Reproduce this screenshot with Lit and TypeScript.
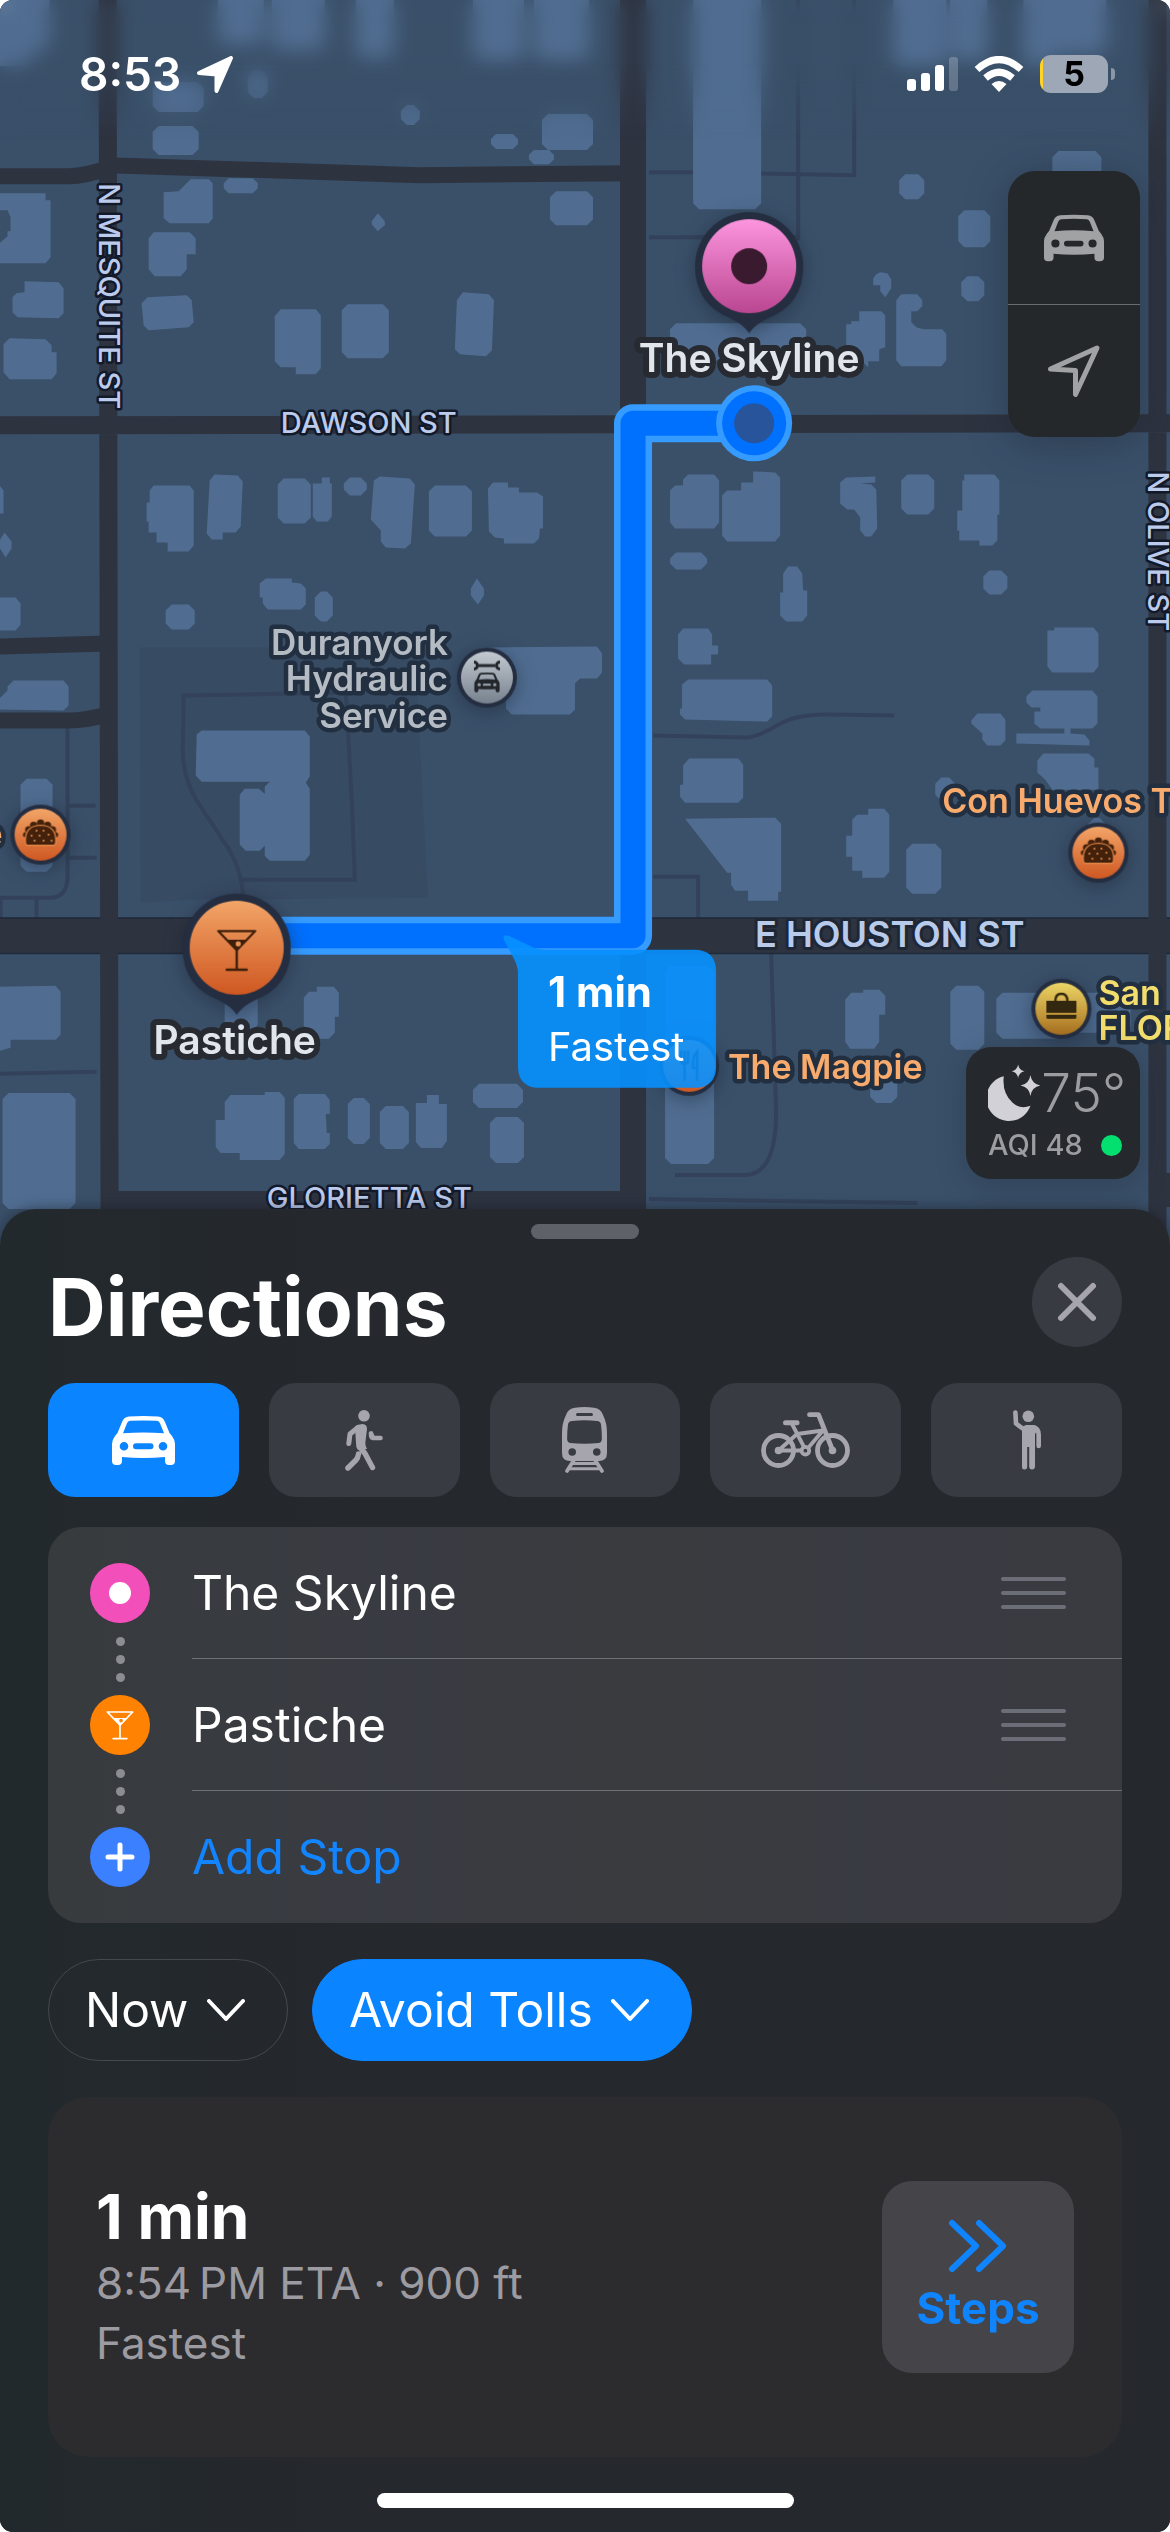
import { LitElement, html, svg, css } from "lit";
import { customElement, property, state } from "lit/decorators.js";
import { classMap } from "lit/directives/class-map.js";

type Box = [number, number, number, number];

/* Footprints given as left, top, right, bottom; corners are cut when drawn. */
const BLOCKS: Box[] = [
  [-10, -10, 50, 50], [-10, 20, 32, 66], [218, -10, 264, 44], [272, -10, 325, 50], [356, -10, 394, 58],
  [473, -10, 524, 60], [534, -10, 589, 60], [893, -10, 946, 66], [950, -10, 987, 60],
  [1023, -10, 1106, 54], [1023, 20, 1052, 66], [693, -10, 761, 209],
  [153, 82, 204, 112], [248, 70, 268, 98], [401, 105, 420, 125],
  [153, 126, 199, 155], [491, 134, 518, 149], [529, 150, 554, 164], [542, 114, 593, 150],
  [224, 178, 258, 193], [342, 304, 389, 358], [550, 191, 593, 225],
  [899, 174, 924, 199], [958, 210, 990, 247], [961, 276, 984, 301], [1052, 151, 1101, 185],
  [670, 323, 806, 360], [278, 478, 311, 523], [344, 477, 367, 495], [429, 485, 472, 536],
  [315, 591, 333, 621], [166, 604, 195, 629], [21, 778, 53, 871], [901, 474, 934, 514],
  [670, 552, 707, 569], [983, 570, 1007, 594], [935, 777, 955, 800], [906, 843, 941, 893],
  [1088, 817, 1105, 840], [950, 985, 984, 1049], [996, 992, 1062, 1038], [1062, 992, 1130, 1032],
  [870, 1076, 897, 1102], [665, 965, 714, 1163], [3, 1092, 76, 1208], [225, 990, 258, 1030],
  [348, 1097, 370, 1143], [380, 1105, 409, 1148], [473, 1083, 523, 1107], [490, 1116, 524, 1162],
];

const FOOTPRINTS = [
  "164,192 179,191 191,179 209,179 213,183 213,218 209,223 170,223 164,218",
  "149,238 154,232 190,232 196,238 196,254 187,254 187,269 181,276 155,276 149,269",
  "142,303 148,297 187,295 192,300 194,322 189,327 149,330 144,325",
  "275,316 281,309 316,309 321,315 321,368 316,374 296,374 296,367 281,367 275,361",
  "457,300 463,292 489,294 494,300 492,350 486,356 460,354 455,349",
  "0,193 46,193 46,200 51,200 51,257 46,263 0,263 0,243 8,236 8,231 11,231 11,217 8,210 0,210",
  "25,281 59,282 64,288 64,313 59,318 18,317 13,312 13,297 17,293 25,292",
  "4,344 10,338 46,339 52,345 52,352 57,352 57,373 52,379 10,379 4,372",
  "378,213 385,221 385,225 378,231 372,224 372,221",
  "873,278 876,274 880,272 887,273 891,279 891,288 885,297 880,291 880,285 873,285",
  "859,311 881,311 885,315 885,347 879,349 879,361 868,361 868,367 846,345 846,324 851,324 851,321 859,321",
  "896,300 901,294 917,294 922,300 922,306 917,311 911,311 911,322 916,327 923,329 942,329 946,334 946,360 941,366 901,366 896,360",
  "150,490 154,485 190,485 194,490 194,545 189,551 168,551 168,542 157,542 157,532 149,532 149,521 147,521 147,502 150,502",
  "210,480 215,474 238,475 243,481 241,526 236,532 223,532 223,539 212,539 207,533",
  "313,483 322,483 322,477 330,477 330,483 332,483 332,516 328,521 317,521 313,516",
  "374,480 380,476 410,478 415,484 411,543 405,548 386,547 381,541 381,530 371,519",
  "488,488 493,482 508,482 508,487 519,487 519,492 537,492 543,496 543,528 540,528 539,538 534,543 504,543 504,538 495,537 489,531",
  "260,583 266,578 292,578 292,582 301,583 306,588 306,604 301,609 268,609 263,603 263,597 260,597",
  "477,578 484,588 484,595 478,604 471,595 471,588",
  "0,485 4,490 4,513 0,513",
  "5,532 12,541 12,548 6,557 0,547 0,540",
  "0,597 16,597 21,603 21,624 16,630 0,630",
  "0,698 8,690 8,686 14,680 64,680 69,686 69,705 64,710 0,709",
  "480,647 597,646 602,653 602,672 597,678 580,678 575,683 575,709 570,714 512,714 506,708 506,690 480,690",
  "197,734 202,730 305,730 310,736 310,776 306,782 310,788 310,854 305,860 270,860 265,855 265,845 260,850 246,850 240,844 240,794 245,788 259,788 265,793 265,786 270,781 202,781 196,775",
  "670,490 675,485 683,485 683,479 688,474 714,474 719,480 719,522 714,528 675,528 670,522",
  "722,495 727,490 741,490 741,482 753,482 753,471 775,472 780,477 780,535 775,541 727,541 722,535",
  "840,482 846,477 875,476 875,482 860,483 871,484 876,489 877,528 871,536 865,536 860,530 860,517 854,509 847,509 840,503",
  "964,474 994,474 999,480 999,514 997,514 997,540 992,545 979,545 979,540 959,540 959,530 957,530 957,510 962,510 962,480 964,480",
  "783,573 788,566 797,566 802,573 803,590 807,590 807,615 802,621 786,621 780,615 780,592 783,592",
  "678,634 683,628 708,628 712,634 712,645 718,645 718,654 711,654 711,664 684,664 678,658",
  "682,684 688,679 767,679 772,685 772,716 767,721 685,719 680,714 680,708 682,708",
  "1047,630 1054,630 1054,627 1093,627 1098,633 1098,666 1093,672 1052,672 1047,666",
  "1026,696 1032,690 1092,690 1097,696 1097,723 1092,728 1070,728 1070,733 1084,734 1089,740 1089,745 1016,743 1016,733 1064,733 1064,728 1040,728 1034,723 1034,711 1040,711 1040,707 1031,707 1026,702",
  "971,720 977,713 1000,713 1005,719 1005,740 1000,745 987,745 982,739 982,733 971,723",
  "1037,760 1043,753 1088,753 1094,758 1094,767 1098,767 1098,789 1052,789 1045,779 1037,772",
  "683,765 689,758 738,758 743,764 743,797 738,802 685,802 680,796 680,784 683,784",
  "685,818 775,817 781,823 781,891 778,891 778,900 748,900 748,890 735,890 731,884 731,872 727,872",
  "852,819 857,814 868,814 868,808 884,808 889,814 889,871 884,877 862,877 862,870 852,870 852,856 846,856 846,835 852,835",
  "845,999 851,992 863,992 863,989 879,989 885,995 885,1014 879,1014 879,1041 874,1048 850,1048 845,1041",
  "0,986 56,985 61,991 61,1034 56,1039 11,1039 11,1047 0,1050",
  "304,997 309,991 317,991 317,986 334,986 339,992 339,1016 335,1016 335,1032 329,1038 316,1038 304,1025",
  "225,1101 231,1094 265,1094 265,1091 280,1091 285,1097 285,1153 280,1159 240,1159 240,1152 221,1152 216,1146 216,1119 225,1119",
  "294,1098 299,1093 325,1093 330,1099 330,1113 326,1113 327,1132 330,1132 330,1143 325,1148 299,1148 294,1142",
  "416,1102 427,1102 427,1094 439,1094 439,1103 447,1103 447,1140 442,1147 421,1147 416,1141",
];

const PATHS = [
  "M649 172H693L854 175V0",
  "M798 0V240",
  "M649 237H798",
  "M68 726V875Q68 897 50 897H0M68 805H96M68 857H97M37 897V918M1 897V918",
  "M345 692L184 695L183 752Q184 778 197 800L230 850Q242 870 244 900",
  "M346 692L352 800L355 879H243",
  "M653 735L745 737Q756 737 775 726Q795 713 830 714L894 715",
  "M653 876H698V918",
  "M771 953L776 1110Q776 1174 745 1174H675",
  "M649 1198L917 1202",
  "M0 1073L97 1071",
];

const cut = ([l, t, r, b]: Box) => {
  const c = Math.min(6, Math.round(Math.min(r - l, b - t) / 3));
  return `M${l + c} ${t}H${r - c}L${r} ${t + c}V${b - c}L${r - c} ${b}H${l + c}L${l} ${b - c}V${t + c}Z`;
};

const carShape = svg`
  <path fill="currentColor" fill-rule="evenodd" d="M0 28Q0 24 3 20L5.500 17L10 6Q12 1 17 .6Q31.500 -.6 46 .6Q51 1 53 6L57.500 17L60 20Q63 24 63 28V45Q63 49 59 49H57Q53 49 53 45V41Q31.500 43 10 41V45Q10 49 6 49H4Q0 49 0 45ZM11 17.300L15 7.300Q16 5 18 4.800Q31.500 4 45 4.800Q47 5 48 7.300L52 17.300Q31.500 15.500 11 17.300ZM12 26A4.300 4.300 0 1 0 12 34.600A4.300 4.300 0 1 0 12 26ZM51 26A4.300 4.300 0 1 0 51 34.600A4.300 4.300 0 1 0 51 26ZM24 27.300A3 3 0 0 0 24 33.300H38.500A3 3 0 0 0 38.500 27.300Z"/>`;

const carIcon = html`<svg width="63" height="49" viewBox="0 0 63 49" aria-hidden="true">${carShape}</svg>`;

const walkIcon = html`<svg width="38" height="61" viewBox="0 0 38 61" fill="none" stroke="currentColor" stroke-linecap="round" stroke-linejoin="round" aria-hidden="true">
  <circle cx="19" cy="5.800" r="5.800" fill="currentColor" stroke="none"/>
  <path fill="currentColor" stroke="none" d="M10 16.500Q13 14 17.500 14Q22 14.200 22 19L20.300 33Q20.300 36 22 39L13 40Q10.800 37 11 33Z"/>
  <path stroke-width="5" d="M13 17.500L5 24L3.800 33.500"/>
  <path stroke-width="5.400" d="M14.500 36.500L20 43.500L27.500 57.500M13.500 44Q13 48 11 50L2.900 58"/>
  <path stroke-width="4.600" d="M26 23.500L28 28H35.500"/>
  <path fill="currentColor" stroke="none" d="M24 21L27 25.500L26 30Q24 28 23.800 26Z"/>
</svg>`;

const trainIcon = html`<svg width="45" height="67" viewBox="0 0 45 67" fill="none" aria-hidden="true">
  <path fill="currentColor" fill-rule="evenodd" d="M4 8Q6 1.500 13 .7Q22.500 -.7 32 .7Q39 1.500 41 8Q45 16 45 26V46Q45 54 37 54H8Q0 54 0 46V26Q0 16 4 8ZM15.500 6A1.500 1.500 0 0 0 15.500 9H29.500A1.500 1.500 0 0 0 29.500 6ZM10 14Q6.500 14.400 6 17.500Q5 25 5.200 33Q5.500 35.500 8 36Q22.500 37.500 37 36Q39.500 35.500 39.800 33Q40 25 39 17.500Q38.500 14.400 35 14Q22.500 12.600 10 14ZM10.200 41.200A3.800 3.800 0 1 0 10.200 48.800A3.800 3.800 0 1 0 10.200 41.200ZM34.800 41.200A3.800 3.800 0 1 0 34.800 48.800A3.800 3.800 0 1 0 34.800 41.200Z"/>
  <path stroke="currentColor" stroke-width="3.800" stroke-linecap="round" d="M12 53L5 64M33 53L40 64"/>
  <path stroke="currentColor" stroke-width="3" d="M11 56.500H34M7 61.700H38"/>
</svg>`;

const bikeIcon = html`<svg width="90" height="57" viewBox="0 0 90 57" fill="none" stroke="currentColor" stroke-linecap="round" stroke-linejoin="round" aria-hidden="true">
  <g stroke-width="4.800"><circle cx="17.500" cy="38.500" r="15"/><circle cx="71.500" cy="38.500" r="15"/></g>
  <g stroke-width="3.800">
    <path d="M24.500 10.700H36" stroke-width="5"/>
    <path d="M30.500 11L43 35M36 22L62 18.500L47.500 35.500M17.500 38.500L36 22M17.500 38.500H40"/>
    <path d="M48.500 2.700H57.500L71.500 38" stroke-width="4.800"/>
    <circle cx="44.400" cy="38.700" r="3.800"/>
  </g>
  <g fill="currentColor" stroke="none"><circle cx="17.500" cy="38.500" r="3.800"/><circle cx="71.500" cy="38.500" r="3.800"/></g>
</svg>`;

const hailIcon = html`<svg width="28" height="60" viewBox="0 0 28 60" fill="none" stroke="currentColor" stroke-linecap="round" stroke-linejoin="round" aria-hidden="true">
  <circle cx="15.300" cy="6.300" r="5.800" fill="currentColor" stroke="none"/>
  <path stroke-width="4.600" d="M2.400 2.600L3 13.500L11 19.500M20 17.500Q25.700 18 25.700 25V36"/>
  <path fill="currentColor" stroke="none" d="M9 17L13 15H20Q24 15 25.500 19L22 24V57Q21.500 59.500 19 59.500Q16.400 59.500 16.200 57V37H14.200V57Q14 59.500 11.600 59.500Q9 59.500 9 57Z"/>
</svg>`;

const martini = (body: string, olive: string) => svg`
  <path d="M1.500 1.300H38.500L20 20.500Z" fill="none" stroke=${body} stroke-width="2.200" stroke-linejoin="round"/>
  <path d="M9 10H31L20 21Z" fill=${body}/>
  <circle cx="21.500" cy="14" r="2.600" fill=${olive}/>
  <path d="M20 20V40M10 40H30" fill="none" stroke=${body} stroke-width="2.400" stroke-linecap="round"/>`;

const taco = svg`
  <g fill="#43210b">
    <circle cx="-12" cy="-5" r="3.500"/><circle cx="-7" cy="-9.500" r="3.600"/><circle cx="0" cy="-11.500" r="3.700"/>
    <circle cx="7" cy="-9.500" r="3.600"/><circle cx="12" cy="-5" r="3.500"/><circle cx="-15" cy="0" r="2.600"/><circle cx="15" cy="0" r="2.600"/>
    <path stroke="#e58a4b" stroke-width="1.200" d="M-15 9Q-17 -9 0 -9.500Q17 -9 15 9Q14.500 10.500 13 10.500H-13Q-14.500 10.500 -15 9Z"/>
  </g>
  <g fill="#e9924f"><circle cx="-9" cy="1" r="1"/><circle cx="-4" cy="-4" r="1"/><circle cx="3" cy="-4" r="1"/><circle cx="8" cy="0" r="1"/><circle cx="-1" cy="1" r="1"/><circle cx="-6" cy="6" r="1"/><circle cx="3" cy="6" r="1"/><circle cx="11" cy="6" r="1"/></g>`;

const dot = (x: number, y: number, fill: string, glyph: unknown) => svg`
  <g transform="translate(${x} ${y})">
    <circle r="30" class="rim"/>
    <circle r="26" fill="url(#${fill})"/>
    ${glyph}
  </g>`;

const bigPin = (x: number, y: number, fill: string, glyph: unknown) => svg`
  <g transform="translate(${x} ${y})">
    <path class="rim" d="M-54 0A54 54 0 1 1 54 0Q54 38 19 52Q6 58 0 67Q-6 58 -19 52Q-54 38 -54 0Z"/>
    <circle r="47" fill="url(#${fill})"/>
    ${glyph}
  </g>`;

@customElement("route-map")
class RouteMap extends LitElement {
  static styles = css`
    :host { display: block; }
    svg { display: block; width: 100%; height: 100%; }
    text { font-family: Inter, "Liberation Sans", sans-serif; paint-order: stroke; stroke-linejoin: round; }
    .land { fill: #3a5069; }
    .park { fill: #374b63; }
    .built { fill: #506d91; }
    .path { fill: none; stroke: #33425a; stroke-width: 4; }
    .road { fill: none; stroke: #2e3340; stroke-width: 18; }
    .narrow { stroke-width: 16; }
    .wide { stroke-width: 26; }
    .major { stroke-width: 34; }
    .edge { fill: none; stroke: #1f2939; stroke-width: 37; }
    .route { fill: none; stroke: #369bff; stroke-width: 38; stroke-linejoin: round; }
    .inner { stroke: #0070ff; stroke-width: 25; }
    .rim { fill: #252e41; }
    .street { font-size: 29px; font-weight: 500; fill: #bccaeb; stroke: #121929; stroke-width: 5px; }
    .avenue { font-size: 36px; font-weight: 600; fill: #b9cbea; stroke: #1d2736; stroke-width: 6px; }
    .name { font-size: 39px; font-weight: 600; fill: #e1e6ed; stroke: #272b31; stroke-width: 12px; text-anchor: middle; }
    .place { font-size: 34px; font-weight: 600; stroke: #212f40; stroke-width: 9px; }
    .service { font-size: 35px; fill: #b4bbc3; text-anchor: end; }
    .food { fill: #f8ab6d; }
    .shop { fill: #f3dd6c; }
    .bubble { fill: #0790ff; fill-opacity: 0.9; }
    .time { font-size: 42px; font-weight: 700; fill: #fff; }
    .note { font-size: 40px; font-weight: 400; fill: #fff; }
    .soft { filter: drop-shadow(0 4px 10px rgba(20, 28, 44, 0.45)); }
  `;

  render() {
    return html`
      <svg viewBox="0 0 1170 1244" preserveAspectRatio="xMidYMin slice" role="img" aria-label="Route map">
        <defs>
          <linearGradient id="pink" x1="0" y1="0" x2="0" y2="1"><stop offset="0" stop-color="#fd95df"/><stop offset="1" stop-color="#ba4690"/></linearGradient>
          <linearGradient id="orange" x1="0" y1="0" x2="0" y2="1"><stop offset="0" stop-color="#f3a568"/><stop offset="1" stop-color="#cf5822"/></linearGradient>
          <linearGradient id="silver" x1="0" y1="0" x2="0" y2="1"><stop offset="0" stop-color="#c3cad1"/><stop offset="1" stop-color="#77828f"/></linearGradient>
          <linearGradient id="gold" x1="0" y1="0" x2="0" y2="1"><stop offset="0" stop-color="#ecd566"/><stop offset="1" stop-color="#a8701f"/></linearGradient>
        </defs>
        <rect class="land" width="1170" height="1244"/>
        <polygon class="park" points="140,647 415,647 428,897 190,899 141,902"/>
        <g class="path">${PATHS.map((d) => svg`<path d=${d}/>`)}</g>
        <path class="built" d=${BLOCKS.map(cut).join("")}/>
        <g class="built">${FOOTPRINTS.map((p) => svg`<polygon points=${p}/>`)}</g>

        <path class="edge" d="M0 935H1170"/>
        <g class="road">
          <path class="narrow" d="M0 176H70Q85 176 108 168M108 165L420 175L633 173M0 646L108 643M0 720H70Q85 720 108 714"/>
          <path d="M108 0L110 1244M0 425L1170 423M1157 0V1244"/>
          <path class="wide" d="M633 0V1244"/>
          <path class="major" d="M0 935H1170M118 1207H633M1157 1189H1170"/>
        </g>

        <text class="street" transform="translate(99 183) rotate(90)">N MESQUITE ST</text>
        <text class="street" transform="translate(1148 471) rotate(90)">N OLIVE ST</text>
        <text class="street" x="281" y="433">DAWSON ST</text>
        <text class="street" x="267" y="1207">GLORIETTA ST</text>
        <text class="avenue" x="755" y="946">E HOUSTON ST</text>

        <path class="route" d="M240 935H633V423H754"/>
        <path class="route inner" d="M240 935H633V423H754"/>
        <circle cx="754" cy="423" r="38" fill="#369bff"/>
        <circle cx="754" cy="423" r="32" fill="#0070ff"/>
        <circle cx="754" cy="423" r="20" fill="#27549a"/>

        <g class="soft">
          ${dot(487, 677, "silver", svg`
            <g fill="none" stroke="#23272c" stroke-width="3"><path d="M-8 -12H8"/><path d="M-13 -15.500A3.300 3.300 0 1 1 -13 -8.500M13 -15.500A3.300 3.300 0 1 0 13 -8.500"/></g>
            <g transform="translate(-12.600 -5) scale(.4)" color="#23272c">${carShape}</g>`)}
          ${dot(41, 834, "orange", taco)}
          ${dot(1098, 852, "orange", taco)}
          ${dot(1061, 1008, "gold", svg`
            <path fill="#33280f" d="M-15 -8H15V4H-15ZM-15 6H15V8.500Q15 10 13.500 10H-13.500Q-15 10 -15 8.500Z"/>
            <path fill="none" stroke="#33280f" stroke-width="2.400" d="M-6 -8Q-6 -15 0 -15Q6 -15 6 -8"/>`)}
          ${dot(689, 1065, "orange", svg`
            <path fill="none" stroke="#43210b" stroke-width="2.600" stroke-linecap="round" d="M-8 -14V-5Q-8 -2 -4.500 -2Q-1 -2 -1 -5V-14M-4.500 -14V14M8 14V-14Q3 -9 4 2H8"/>`)}
          ${bigPin(749, 266, "pink", svg`<circle r="18" fill="#3a1a2f"/>`)}
          ${bigPin(237, 947, "orange", svg`<g transform="translate(-20 -18)">${martini("#3f1f0a", "#e89556")}</g>`)}
        </g>

        <text class="name" x="749" y="372">The Skyline</text>
        <text class="name" x="235" y="1053">Pastiche</text>
        <text class="place service" x="448" y="654">Duranyork</text>
        <text class="place service" x="448" y="690">Hydraulic</text>
        <text class="place service" x="448" y="727">Service</text>
        <text class="place food" x="3" y="845" text-anchor="end">e</text>
        <text class="place food" x="942" y="812">Con Huevos T</text>
        <text class="place food" x="728" y="1078">The Magpie</text>
        <text class="place shop" x="1098" y="1004">San</text>
        <text class="place shop" x="1098" y="1039">FLOR</text>

        <path class="bubble" d="M504 939Q502 933 509 935L534 947Q540 949 546 949H694Q716 949 716 971V1065Q716 1087 694 1087H540Q518 1087 518 1065V972Q518 966 514 958Z"/>
        <text class="time" x="548" y="1006">1 min</text>
        <text class="note" x="548" y="1060">Fastest</text>
      </svg>
    `;
  }
}

@customElement("status-bar")
class StatusBar extends LitElement {
  static styles = css`
    :host { display: flex; align-items: center; justify-content: space-between; color: #fff; }
    .side { display: flex; align-items: center; gap: 16px; }
    .clock { font-size: 46px; line-height: 60px; font-weight: 600; }
    .battery { display: flex; align-items: center; gap: 3px; }
    .cell { width: 68px; height: 38px; border-radius: 11px; background: linear-gradient(90deg, #ffd426 3px, #9da7b5 3px); color: #000; font-size: 34px; line-height: 38px; font-weight: 700; text-align: center; }
    .nub { width: 4px; height: 12px; border-radius: 0 4px 4px 0; background: #8b97a7; }
  `;

  render() {
    return html`
      <div class="side">
        <time class="clock">8:53</time>
        <svg width="36" height="37" viewBox="0 0 36 37" aria-hidden="true"><path fill="#fff" stroke="#fff" stroke-width="4" stroke-linejoin="round" d="M2 17L34 2L19.500 35V18.500Z"/></svg>
      </div>
      <div class="side">
        <svg width="51" height="36" viewBox="0 0 51 36" fill="#fff" aria-hidden="true">
          <rect y="23" width="9" height="12" rx="3"/><rect x="14" y="17" width="9" height="18" rx="3"/><rect x="28" y="9" width="9" height="26" rx="3"/><rect x="42" y="1" width="9" height="34" rx="3" fill-opacity=".22"/>
        </svg>
        <svg width="50" height="36" viewBox="0 0 50 36" fill="none" stroke="#fff" stroke-width="7" aria-hidden="true">
          <path d="M3 13.500Q25 -6.500 47 13.500M11.500 22Q25 10.500 38.500 22"/><path fill="#fff" stroke="none" d="M17.500 28Q25 22 32.500 28L25 36Z"/>
        </svg>
        <div class="battery"><div class="cell">5</div><div class="nub"></div></div>
      </div>
    `;
  }
}

@customElement("stop-list")
class StopList extends LitElement {
  static styles = css`
    :host { display: flex; border-radius: 33px; background: linear-gradient(90deg, #373b3e, #393b42 35%, #3a3b3f 55%, #393b42 75%, #3a3b41); overflow: hidden; }
    .rail { display: flex; flex-direction: column; align-items: center; padding: 36px 42px; }
    .badge { display: grid; place-items: center; width: 60px; height: 60px; border-radius: 50%; }
    .pink { background: #f34fba; }
    .amber { background: #ff8202; }
    .blue { background: #3b80ff; }
    .dots { display: flex; flex-direction: column; align-items: center; justify-content: center; gap: 9px; height: 72px; }
    .dots i { width: 9px; height: 9px; border-radius: 50%; background: #8c8c93; }
    .list { flex: 1; margin: 0; padding: 0; list-style: none; }
    .row { display: flex; align-items: center; justify-content: space-between; box-sizing: border-box; height: 132px; padding-right: 56px; border-bottom: 1px solid #6d7075; font-size: 48px; line-height: 60px; color: #fff; }
    .row:last-child { border-bottom: 0; }
    button { border: 0; margin: 0; padding: 0; background: none; font: inherit; cursor: pointer; }
    .handle { display: flex; flex-direction: column; gap: 10px; width: 65px; cursor: grab; }
    .handle i { height: 4px; border-radius: 2px; background: #6c6e77; }
    .add { color: #1285fe; }
  `;

  @property({ attribute: false }) stops: string[] = [];

  render() {
    return html`
      <div class="rail" aria-hidden="true">
        <div class="badge pink"><svg width="24" height="24"><circle cx="12" cy="12" r="11" fill="#fff"/></svg></div>
        <div class="dots"><i></i><i></i><i></i></div>
        <div class="badge amber"><svg width="28" height="29" viewBox="0 0 40 42">${martini("#fff", "#ff8202")}</svg></div>
        <div class="dots"><i></i><i></i><i></i></div>
        <div class="badge blue"><svg width="30" height="30"><path d="M15 3V27M3 15H27" stroke="#fff" stroke-width="5" stroke-linecap="round"/></svg></div>
      </div>
      <ul class="list">
        ${this.stops.map((name) => html`
          <li class="row"><span>${name}</span><button class="handle" aria-label="Reorder ${name}"><i></i><i></i><i></i></button></li>`)}
        <li class="row"><button class="add">Add Stop</button></li>
      </ul>
    `;
  }
}

const MODES = [
  { id: "drive", label: "Drive", icon: carIcon },
  { id: "walk", label: "Walk", icon: walkIcon },
  { id: "transit", label: "Transit", icon: trainIcon },
  { id: "cycle", label: "Cycle", icon: bikeIcon },
  { id: "ride", label: "Ride share", icon: hailIcon },
];

@customElement("app-root")
class AppRoot extends LitElement {
  static styles = css`
    :host { display: block; background: #fff; font-family: Inter, "Liberation Sans", sans-serif; }
    .screen { display: flex; flex-direction: column; min-height: 100vh; border-radius: 13px; overflow: hidden; background: #25282d; }
    .map { position: relative; display: flex; flex-direction: column; flex: 1 0 1244px; }
    .canvas { position: absolute; inset: 0; }
    .haze { position: absolute; inset: 0 0 auto; height: 140px; backdrop-filter: blur(10px); mask-image: linear-gradient(#000 45%, transparent); }
    .status { position: relative; padding: 44px 55px 0 79px; }
    .overlay { position: relative; display: flex; flex: 1; flex-direction: column; align-items: flex-end; justify-content: space-between; padding: 67px 30px 66px; }
    button, select { border: 0; margin: 0; padding: 0; font: inherit; color: inherit; background: none; cursor: pointer; }
    .tools { display: flex; flex-direction: column; width: 132px; border-radius: 27px; background: #25282b; color: #a1a2a4; box-shadow: 0 6px 40px rgba(25, 32, 46, 0.4); }
    .tool { display: grid; place-items: center; height: 133px; }
    .tool + .tool { border-top: 1px solid #6a6c6f; }
    .weather { display: flex; flex-direction: column; gap: 4px; box-sizing: border-box; width: 174px; padding: 16px 14px 16px 22px; border-radius: 25px; background: #25282c; color: #9c9da1; box-shadow: 0 6px 30px rgba(25, 32, 46, 0.3); }
    .sky { display: flex; align-items: center; justify-content: space-between; }
    .temp { font-size: 53px; line-height: 60px; font-weight: 300; }
    .air { display: flex; align-items: center; justify-content: space-between; padding-right: 4px; font-size: 29px; line-height: 36px; font-weight: 500; }
    .good { width: 21px; height: 21px; border-radius: 50%; background: #04e070; }
    .sheet { position: relative; display: flex; flex-direction: column; margin-top: -36px; padding: 15px 48px 24px; border-radius: 36px 36px 0 0; background: linear-gradient(90deg, #22292c, #25282d 30%, #25282d); box-shadow: 0 0 14px rgba(20, 25, 34, 0.55); color: #fff; }
    .grabber { align-self: center; width: 108px; height: 15px; border-radius: 8px; background: #5f6169; }
    .head { display: flex; align-items: center; justify-content: space-between; margin: 18px 0 36px; }
    h1 { margin: 0; padding-top: 10px; font-size: 80px; line-height: 80px; font-weight: 700; }
    .close { display: grid; place-items: center; width: 90px; height: 90px; border-radius: 50%; background: #393b42; color: #a6a5ae; }
    .modes { display: grid; grid-template-columns: repeat(5, 1fr); gap: 30px; }
    .mode { display: grid; place-items: center; height: 114px; border-radius: 27px; background: #393b42; color: #a6a5ae; }
    .mode.on { background: #0b84ff; color: #fff; }
    .stops { margin: 30px 0 36px; }
    .filters { display: flex; gap: 24px; }
    .pill { display: flex; align-items: center; gap: 18px; box-sizing: border-box; height: 102px; padding: 0 42px 0 36px; border: 1px solid #45484c; border-radius: 51px; font-size: 48px; line-height: 60px; }
    .pill.on { border-color: #0b84ff; background: #0b84ff; }
    select { appearance: none; outline: none; }
    .card { display: flex; align-items: center; justify-content: space-between; box-sizing: border-box; min-height: 360px; margin: 36px 0; padding: 48px; border-radius: 40px; background: #2c2c2e; }
    .card h2 { margin: 0; font-size: 62px; line-height: 72px; font-weight: 700; }
    .card p { margin: 0; font-size: 44px; line-height: 60px; color: #9c9ba1; }
    .steps { display: flex; flex-direction: column; align-items: center; justify-content: center; gap: 8px; width: 192px; height: 192px; border-radius: 30px; background: #454449; color: #0f84fc; font-size: 44px; line-height: 54px; font-weight: 700; }
    .home { align-self: center; width: 417px; max-width: 60%; height: 15px; border-radius: 8px; background: #fff; }
  `;

  @state() private mode = "drive";

  render() {
    const chevron = html`<svg width="38" height="22" viewBox="0 0 38 22" fill="none" stroke="#fff" stroke-width="4" stroke-linecap="round" stroke-linejoin="round" aria-hidden="true"><path d="M2 2L19 20L36 2"/></svg>`;
    return html`
      <main class="screen">
        <section class="map">
          <route-map class="canvas"></route-map>
          <div class="haze"></div>
          <status-bar class="status"></status-bar>
          <div class="overlay">
            <div class="tools">
              <button class="tool" aria-label="Map mode"><svg width="60" height="48" viewBox="0 0 63 49" aria-hidden="true">${carShape}</svg></button>
              <button class="tool" aria-label="Locate me"><svg width="54" height="54" viewBox="0 0 54 54" fill="none" stroke="currentColor" stroke-width="5" stroke-linejoin="round" aria-hidden="true"><path d="M3.500 25L50 4L28.500 50.500V26.500Z"/></svg></button>
            </div>
            <div class="weather">
              <div class="sky">
                <svg width="54" height="58" viewBox="0 0 54 58" fill="#d2d1d8" aria-hidden="true">
                  <path d="M16 12A23 23 0 1 0 43 42Q33 46 25 39Q14 29 16 12Z"/>
                  <path d="M30.500 0Q31.500 6 37 7Q31.500 8 30.500 14Q29.500 8 24 7Q29.500 6 30.500 0ZM43 11Q44.500 20 53 21.500Q44.500 23 43 32Q41.500 23 33 21.500Q41.500 20 43 11Z"/>
                </svg>
                <span class="temp">75°</span>
              </div>
              <div class="air"><span>AQI 48</span><span class="good"></span></div>
            </div>
          </div>
        </section>

        <section class="sheet">
          <div class="grabber"></div>
          <header class="head">
            <h1>Directions</h1>
            <button class="close" aria-label="Close"><svg width="40" height="40" fill="none" stroke="currentColor" stroke-width="6" stroke-linecap="round" aria-hidden="true"><path d="M4 4L36 36M36 4L4 36"/></svg></button>
          </header>
          <nav class="modes" aria-label="Travel mode">
            ${MODES.map((m) => html`
              <button class=${classMap({ mode: true, on: m.id === this.mode })} aria-label=${m.label} aria-pressed=${m.id === this.mode} @click=${() => (this.mode = m.id)}>${m.icon}</button>`)}
          </nav>
          <stop-list class="stops" .stops=${["The Skyline", "Pastiche"]}></stop-list>
          <div class="filters">
            <label class="pill"><select aria-label="Departure"><option>Now</option></select>${chevron}</label>
            <label class="pill on"><select aria-label="Route options"><option>Avoid Tolls</option></select>${chevron}</label>
          </div>
          <article class="card">
            <div>
              <h2>1 min</h2>
              <p>8:54&#8239;PM ETA · 900 ft</p>
              <p>Fastest</p>
            </div>
            <button class="steps">
              <svg width="60" height="54" viewBox="0 0 60 54" fill="none" stroke="currentColor" stroke-width="6" stroke-linecap="round" stroke-linejoin="round" aria-hidden="true"><path d="M4 4L28 27L4 50M31 4L55 27L31 50"/></svg>
              Steps
            </button>
          </article>
          <div class="home"></div>
        </section>
      </main>
    `;
  }
}
